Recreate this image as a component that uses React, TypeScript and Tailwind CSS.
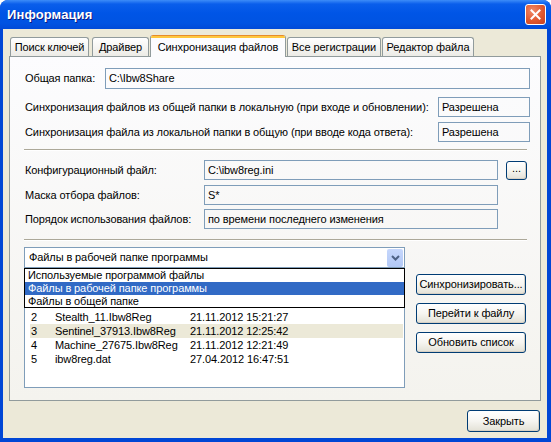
import { ReactNode } from 'react';

const font = "font-['Liberation_Sans',Arial,sans-serif]";

function XpButton({ children, className }: { children: ReactNode; className?: string }) {
    return (
        <div
            className={`flex items-center justify-center border border-[#003c74] rounded-[3px] bg-gradient-to-b from-white via-[#f6f5f1] to-[#e3e1d6] shadow-[inset_-1px_-1px_0_#d6d0c5] text-[11px] ${className ?? ''}`}
        >
            {children}
        </div>
    );
}

function Tab({ label, width, ml, active }: { label: string; width: string; ml: string; active?: boolean }) {
    if (active) {
        return (
            <div className={`${width} ${ml} relative z-10 -mb-px h-[22px] flex flex-col rounded-t-[3px] border-x border-[#919b9c] bg-[#fcfcfe] overflow-hidden`}>
                <div className="h-[1px] bg-[#e68b2c]" />
                <div className="h-[2px] bg-[#ffc73c]" />
                <div className="flex-1 flex items-start justify-center pt-[1px]">{label}</div>
            </div>
        );
    }
    return (
        <div className={`${width} ${ml} h-[19px] flex items-center justify-center rounded-t-[3px] border border-b-0 border-[#919b9c] bg-gradient-to-b from-white to-[#ecebe6]`}>
            {label}
        </div>
    );
}

function Field({ value, className }: { value: string; className?: string }) {
    return (
        <div className={`border border-[#7f9db9] flex items-center px-[3px] ${className ?? ''}`}>
            {value}
        </div>
    );
}

// row 1 of the list sits under the open dropdown, so only 2..5 are drawn
const files = [
    { n: '2', name: 'Stealth_11.Ibw8Reg', date: '21.11.2012 15:21:27' },
    { n: '3', name: 'Sentinel_37913.Ibw8Reg', date: '21.11.2012 12:25:42', hl: true },
    { n: '4', name: 'Machine_27675.Ibw8Reg', date: '21.11.2012 12:21:49' },
    { n: '5', name: 'ibw8reg.dat', date: '27.04.2012 16:47:51' },
];

export default function App() {
    return (
        <div className={`${font} w-[551px] h-[442px] flex flex-col rounded-t-[8px] overflow-hidden bg-[#0046d5] text-[11px] tracking-[-0.1px] text-black`}>
            {/* title bar */}
            <div className="h-[29px] flex items-center bg-[linear-gradient(to_bottom,#3d8cf8_0%,#0a5eeb_14%,#0055e6_45%,#0053e2_80%,#004ad8_100%)]">
                <span className="ml-[7px] text-[13px] font-bold text-white [text-shadow:1px_1px_#0a1883] tracking-[0.1px]">
                    Информация
                </span>
                <div className="ml-auto mr-[5px] w-[21px] h-[21px] rounded-[3px] border border-white bg-[radial-gradient(circle_at_35%_30%,#f08a6a,#e0582f_55%,#c7401f)] flex items-center justify-center">
                    <svg width="11" height="11" viewBox="0 0 11 11">
                        <path d="M1.5 1.5 L9.5 9.5 M9.5 1.5 L1.5 9.5" stroke="white" strokeWidth="2" strokeLinecap="square" />
                    </svg>
                </div>
            </div>

            {/* client area */}
            <div className="flex-1 flex flex-col ml-[3px] mr-[4px] mb-[4px] bg-[#ece9d8] px-[6px] pt-[6px]">
                {/* tabs */}
                <div className="h-[21px] flex items-end">
                    <Tab label="Поиск ключей" width="w-[79px]" ml="ml-[1px]" />
                    <Tab label="Драйвер" width="w-[57px]" ml="ml-[3px]" />
                    <Tab label="Синхронизация файлов" width="w-[136px]" ml="ml-[1px]" active />
                    <Tab label="Все регистрации" width="w-[94px]" ml="ml-[1px]" />
                    <Tab label="Редактор файла" width="w-[92px]" ml="ml-[1px]" />
                </div>

                {/* tab panel */}
                <div className="h-[345px] flex flex-col border border-[#919b9c] bg-gradient-to-b from-[#fcfcfe] to-[#f4f3ee] pl-[14px] pr-[10px] pt-[11px]">
                    <div className="h-[21px] flex items-center">
                        <span className="w-[81px] pl-[1px]">Общая папка:</span>
                        <Field value="C:\Ibw8Share" className="flex-1 h-[21px]" />
                    </div>
                    <div className="mt-[8px] h-[20px] flex items-center">
                        <span className="pl-[1px]">Синхронизация файлов из общей папки в локальную (при входе и обновлении):</span>
                        <Field value="Разрешена" className="ml-auto w-[92px] h-[20px]" />
                    </div>
                    <div className="mt-[5px] h-[20px] flex items-center">
                        <span className="pl-[1px]">Синхронизация файла из локальной папки в общую (при вводе кода ответа):</span>
                        <Field value="Разрешена" className="ml-auto w-[92px] h-[20px]" />
                    </div>

                    <div className="mt-[7px] mr-[3px] h-[2px] border-t border-[#aca899] border-b border-b-white" />

                    <div className="mt-[9px] h-[20px] flex items-center">
                        <span className="w-[180px] pl-[1px]">Конфигурационный файл:</span>
                        <Field value="C:\ibw8reg.ini" className="w-[294px] h-[20px]" />
                        <XpButton className="ml-[8px] w-[21px] h-[19px] pb-[3px]">...</XpButton>
                    </div>
                    <div className="mt-[5px] h-[20px] flex items-center">
                        <span className="w-[180px] pl-[1px]">Маска отбора файлов:</span>
                        <Field value="S*" className="w-[294px] h-[20px]" />
                    </div>
                    <div className="mt-[4px] h-[20px] flex items-center">
                        <span className="w-[180px] pl-[1px]">Порядок использования файлов:</span>
                        <Field value="по времени последнего изменения" className="w-[294px] h-[20px]" />
                    </div>

                    <div className="mt-[10px] mr-[3px] h-[2px] border-t border-[#aca899] border-b border-b-white" />

                    <div className="mt-[6px] flex">
                        <div className="w-[381px] flex flex-col">
                            {/* combo box with open list */}
                            <div className="relative h-[21px] border border-[#7f9db9] bg-white flex items-center pl-[4px]">
                                <span>Файлы в рабочей папке программы</span>
                                <div className="ml-auto mr-px w-[16px] h-[18px] rounded-[2px] bg-gradient-to-b from-[#c6d7fc] to-[#b2c8f6] flex items-center justify-center">
                                    <svg width="9" height="6" viewBox="0 0 9 6">
                                        <path d="M1 1 L4.5 4.5 L8 1" fill="none" stroke="#4d6185" strokeWidth="2" />
                                    </svg>
                                </div>
                                <div className="absolute z-10 left-[-1px] right-[-1px] top-[20px] h-[40px] border border-black bg-white flex flex-col">
                                    <div className="h-[13px] flex items-center pl-[3px]">Используемые программой файлы</div>
                                    <div className="h-[13px] flex items-center pl-[3px] bg-[#316ac5] text-white">Файлы в рабочей папке программы</div>
                                    <div className="h-[12px] flex items-center pl-[3px]">Файлы в общей папке</div>
                                </div>
                            </div>

                            {/* file list */}
                            <div className="mt-[4px] h-[116px] border border-[#7f9db9] bg-white flex flex-col pl-[5px] pr-px pt-[37px]">
                                {files.map(f => (
                                    <div key={f.n} className={`h-[14px] flex items-center ${f.hl ? 'bg-[#ece9d8]' : ''}`}>
                                        <span className="w-[25px] pl-[1px]">{f.n}</span>
                                        <span className="w-[135px]">{f.name}</span>
                                        <span>{f.date}</span>
                                    </div>
                                ))}
                            </div>
                        </div>

                        <div className="ml-[11px] mt-[27px] w-[110px] flex flex-col gap-[8px]">
                            <XpButton className="h-[21px]">Синхронизировать...</XpButton>
                            <XpButton className="h-[21px]">Перейти к файлу</XpButton>
                            <XpButton className="h-[21px]">Обновить список</XpButton>
                        </div>
                    </div>
                </div>

                {/* bottom buttons */}
                <div className="mt-[9px] flex">
                    <XpButton className="ml-auto mr-[1px] w-[73px] h-[22px]">Закрыть</XpButton>
                </div>
            </div>
        </div>
    );
}
